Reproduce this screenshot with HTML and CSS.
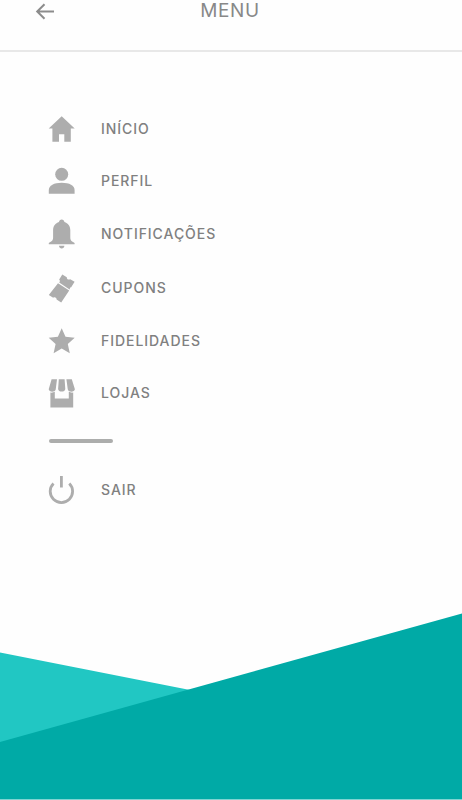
FILE: index.html
```html
<!DOCTYPE html>
<html lang="pt-BR">
<head>
  <meta charset="UTF-8" />
  <meta name="viewport" content="width=device-width, initial-scale=1.0"/>
  <title>Menu</title>
  <link rel="stylesheet" href="styles.css">
</head>
<body>

  <!-- Header -->
  <header>
    <a class="back" href="#" aria-label="Voltar">
      <svg width="20" height="18" viewBox="0 0 20 18">
        <path d="M19 9.5H2.5M9.5 2.2L2.2 9.5L9.5 16.8" />
      </svg>
    </a>
    <h1>MENU</h1>
  </header>

  <!-- Menu -->
  <nav>
    <a class="item" href="#">
      <svg class="icon" viewBox="0 0 28 32"><path d="M13.7 3.2L26.7 15.6H22.8V28.8H16.3V21.3H11V28.8H4.4V15.6H.7Z"/></svg>
      <span>INÍCIO</span>
    </a>
    <a class="item" href="#">
      <svg class="icon" viewBox="0 0 28 32"><circle cx="13.7" cy="9.3" r="6.5"/><path d="M.8 28.7V25C.8 20.6 6 17.8 13.7 17.8S26.6 20.6 26.6 25V28.7Z"/></svg>
      <span>PERFIL</span>
    </a>
    <a class="item tall" href="#">
      <svg class="icon" viewBox="0 0 28 32"><path d="M13.7 1.5C15.2 1.5 16.2 2.4 16.4 3.9C20 5 22.3 8 22.3 12V19.5C22.3 22.5 23.5 23.2 26.6 25V26.2H.8V25C3.9 23.2 5.1 22.5 5.1 19.5V12C5.1 8 7.4 5 11 3.9C11.2 2.4 12.2 1.5 13.7 1.5ZM11 27.8H16.4C16.2 29.5 15.2 30.4 13.7 30.4S11.2 29.5 11 27.8Z"/></svg>
      <span>NOTIFICAÇÕES</span>
    </a>
    <a class="item tall" href="#">
      <svg class="icon" viewBox="0 0 28 32">
        <path d="M14.3 2.4L18.8 5.2C18.7 7.3 20.5 8.2 22.2 7.2L26.6 9.8L23.2 15.2L22.2 15.6L21.6 17.6L11.2 10.6L12 9L11.2 7.6Z"/>
        <path d="M10 11.2L21.2 18.6L13.2 30.4L8.6 27.6C8.7 25.7 6.9 24.7 5.2 25.7L.8 23.1Z"/>
      </svg>
      <span>CUPONS</span>
    </a>
    <a class="item" href="#">
      <svg class="icon" viewBox="0 0 28 32"><path d="M13.7 3.2L17.5 11.8L26.7 12.7L19.8 18.9L21.8 28.2L13.7 23.5L5.6 28.2L7.6 18.9L.7 12.7L9.9 11.8Z"/></svg>
      <span>FIDELIDADES</span>
    </a>
    <a class="item" href="#">
      <svg class="icon" viewBox="0 0 28 32">
        <path d="M3.6 2.3H9L7.7 12.5C7 15.4 1.2 15.6.7 12.3ZM10.8 2.3H16.6L17.3 12C17.2 15.4 10.2 15.4 10.1 12ZM18.4 2.3H23.8L26.9 12.3C26.4 15.6 20.5 15.4 19.8 12.5Z"/>
        <path d="M2.4 15.6C4.4 15.8 5.7 15.4 6.8 14.8V21.4H20.8V14.8C21.9 15.4 23.2 15.8 25.2 15.6V30.5H2.4Z"/>
      </svg>
      <span>LOJAS</span>
    </a>
    <div class="divider"></div>
    <a class="item" href="#">
      <svg class="icon line" viewBox="0 0 28 32"><path d="M13.4 2V13.4M5.5 9.4A11.2 11.2 0 1 0 21.3 9.4"/></svg>
      <span>SAIR</span>
    </a>
  </nav>

  <!-- Bottom shapes -->
  <footer>
    <svg width="462" height="187" viewBox="0 0 462 187">
      <path fill="#21c7c3" d="M0 39.5L190 77V130H0Z"/>
      <path fill="#00aaa6" d="M0 129L462 .5V186.5H0Z"/>
    </svg>
  </footer>

</body>
</html>
```
FILE: styles.css
```css
* {
  box-sizing: border-box;
}
body {
  font-family: Inter, "Liberation Sans", sans-serif;
  background-color: #fefefe;
  color: #808080;
  margin: 0;
  height: 800px;
  display: flex;
  flex-direction: column;
  overflow: hidden;
}
header {
  display: grid;
  grid-template-columns: 60px 1fr 60px;
  height: 52px;
  border-bottom: 2px solid #e8e8e8;
}
.back {
  padding: 2px 0 0 35px;
}
.back svg {
  display: block;
  fill: none;
  stroke: #8c8c8c;
  stroke-width: 2;
}
h1 {
  font-size: 19px;
  font-weight: 400;
  line-height: 20px;
  letter-spacing: 0.6px;
  text-align: center;
  color: #888;
  margin: 0;
  padding: 1px 2px 0 0;
}
nav {
  display: flex;
  flex-direction: column;
  padding: 51px 48px 0;
}
.item {
  display: flex;
  align-items: center;
  gap: 25px;
  height: 52px;
  color: #808080;
  font-size: 14px;
  font-weight: 500;
  letter-spacing: 0.95px;
  text-decoration: none;
}
.item span {
  padding-bottom: 2px;
}
.tall {
  height: 54px;
}
.icon {
  width: 28px;
  height: 32px;
  fill: #adadad;
}
.line {
  fill: none;
  stroke: #adadad;
  stroke-width: 2.8;
}
.divider {
  width: 64px;
  height: 4px;
  margin: 20px 0 21px 1px;
  border-radius: 2px;
  background-color: #acadac;
}
footer {
  margin-top: auto;
}
footer svg {
  display: block;
}
```
